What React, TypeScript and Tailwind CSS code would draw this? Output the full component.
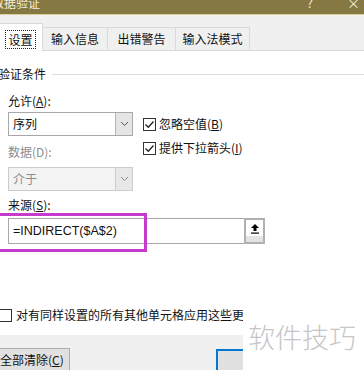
import React from "react";

const cjk = { fontFamily: '"Noto Sans CJK SC", "Noto Sans", sans-serif' };

function Check({ checked }: { checked: boolean }) {
  return (
    <span className="w-[13px] h-[13px] border border-[#333333] bg-white flex items-center justify-center shrink-0">
      {checked && (
        <svg width="11" height="11" viewBox="0 0 11 11">
          <path d="M1.5 5.5 L4.3 8.3 L9.5 2.5" fill="none" stroke="#222" strokeWidth="1.3" />
        </svg>
      )}
    </span>
  );
}

function Chevron({ color }: { color: string }) {
  return (
    <svg width="9" height="6" viewBox="0 0 9 6">
      <path d="M1 1 L4.5 4.5 L8 1" fill="none" stroke={color} strokeWidth="1" />
    </svg>
  );
}

export default function App() {
  return (
    <div
      className="w-[364px] h-[370px] overflow-hidden relative bg-[#f0f0f0] text-[12px] text-[#111]"
      style={cjk}
    >
      {/* title bar */}
      <div className="h-[14px] bg-[#857843] relative overflow-hidden flex justify-between">
        <span className="ml-[-8px] mt-[-5px] text-[12px] leading-[16px] text-[#f3eedc]">数据验证</span>
        <div className="flex gap-[34px] mr-[4px] mt-[-5px] text-[13px] leading-[16px] text-[#f3eedc]">
          <span>?</span>
          <span>×</span>
        </div>
      </div>
      <div className="h-px bg-[#d9cf9c]" />

      {/* tabs */}
      <div className="h-[35px] flex items-end pl-0 ml-[-2px]">
        <div className="w-[45px] h-[28px] bg-white border border-[#d9d9d9] border-b-0 -mb-px relative z-10 flex items-center justify-center">
          <span className="px-[2px] border border-dotted border-[#222] leading-[17px] mt-[3px]">设置</span>
        </div>
        <div className="w-[65px] h-[23px] border border-[#d9d9d9] border-b-0 border-l-0 flex items-center justify-center">输入信息</div>
        <div className="w-[68px] h-[23px] border border-[#d9d9d9] border-b-0 border-l-0 flex items-center justify-center">出错警告</div>
        <div className="w-[74px] h-[23px] border border-[#d9d9d9] border-b-0 border-l-0 flex items-center justify-center">输入法模式</div>
      </div>

      {/* panel */}
      <div className="h-[285px] bg-white border-t border-[#d9d9d9] flex flex-col">
        <div className="mt-[15px] ml-[-2px] flex items-center leading-[16px]">
          <span>验证条件</span>
          <div className="h-px bg-[#dcdcdc] flex-1 ml-[6px]" />
        </div>

        <div className="flex ml-[8px] mt-[11px]">
          <div className="w-[125px] flex flex-col">
            <div className="leading-[16px]">
              允许(<span className="underline">A</span>):
            </div>
            <div className="mt-[3px] h-[24px] border border-[#a8a8a8] flex items-stretch">
              <span className="flex-1 pl-[4px] flex items-center">序列</span>
              <span className="w-[17px] bg-[#e5e5e5] border-l border-[#b4b4b4] flex items-center justify-center">
                <Chevron color="#555" />
              </span>
            </div>
            <div className="mt-[8px] leading-[16px] text-[#8d8d8d]">数据(D):</div>
            <div className="mt-[7px] h-[24px] border border-[#cccccc] bg-[#f3f3f3] flex items-stretch text-[#8d8d8d]">
              <span className="flex-1 pl-[4px] flex items-center">介于</span>
              <span className="w-[17px] bg-[#e8e8e8] border-l border-[#cccccc] flex items-center justify-center">
                <Chevron color="#888" />
              </span>
            </div>
          </div>
          <div className="ml-[10px] pt-[24px] flex flex-col gap-[10px]">
            <div className="flex items-center gap-[3px] h-[14px]">
              <Check checked />
              <span>
                忽略空值(<span className="underline">B</span>)
              </span>
            </div>
            <div className="flex items-center gap-[3px] h-[14px]">
              <Check checked />
              <span>
                提供下拉箭头(<span className="underline">I</span>)
              </span>
            </div>
          </div>
        </div>

        <div className="ml-[8px] mt-[6px] leading-[16px]">
          来源(<span className="underline">S</span>):
        </div>
        <div className="ml-[8px] mt-[5px] w-[257px] h-[26px] flex">
          <div
            className="flex-1 border border-[#a8a8a8] border-r-0 pl-[4px] flex items-center text-[12.5px] text-[#111]"
            style={{ fontFamily: '"Liberation Sans", Arial, sans-serif' }}
          >
            =INDIRECT($A$2)
          </div>
          <div className="w-[21px] border-2 border-[#b0b0b0] flex flex-col">
            <div className="flex-1 bg-white flex items-center justify-center">
              <svg width="10" height="11" viewBox="0 0 10 11">
                <path d="M5 1 L1 5 H3.5 V8 H6.5 V5 H9 Z" fill="#000" />
                <rect x="1" y="9.5" width="8" height="1.2" fill="#000" />
              </svg>
            </div>
            <div className="h-[6px] bg-[#e3e3e3]" />
          </div>
        </div>

        <div className="mt-[63px] ml-[-1px] flex items-center gap-[4px]">
          <Check checked={false} />
          <span className="leading-[16px]">对有同样设置的所有其他单元格应用这些更改</span>
        </div>
      </div>

      {/* bottom buttons */}
      <div className="flex items-start pt-[13px]">
        <div className="ml-[-10px] w-[80px] h-[24px] bg-[#e1e1e1] border border-[#adadad] flex items-center pl-[9px]">
          全部清除(<span className="underline">C</span>)
        </div>
        <div className="ml-[146px] mt-[1px] w-[75px] h-[24px] bg-[#e1e1e1] border-2 border-[#0078d7]" />
      </div>

      {/* magenta annotation */}
      <div className="absolute left-[-3px] top-[213px] w-[150px] h-[39px] border-[3px] border-[#c63bcd]" />

      {/* watermark */}
      <div className="absolute left-[243px] top-[304px] right-0 bottom-0 bg-white">
        <div className="ml-[5px] mt-[18px] text-[27px] leading-[30px] font-light text-[#c6c6c6]">软件技巧</div>
      </div>
    </div>
  );
}
